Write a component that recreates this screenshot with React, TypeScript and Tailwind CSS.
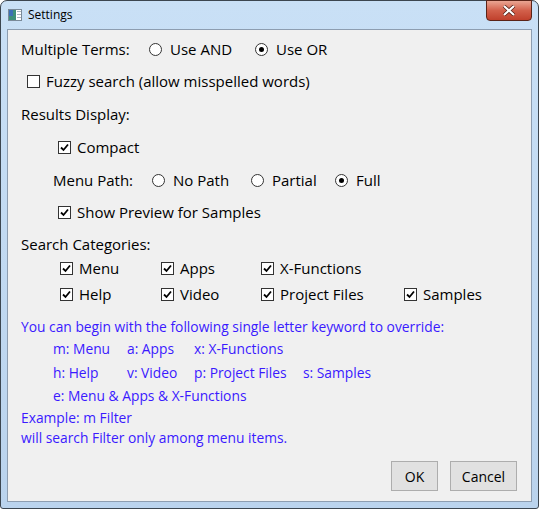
import type { ReactNode } from "react";

const font = { fontFamily: '"Open Sans", "Noto Sans", sans-serif' };

const Radio = ({ checked, children, w }: { checked?: boolean; children: ReactNode; w: string }) => (
  <div className={`flex items-center ${w}`}>
    <span className="flex h-[13px] w-[13px] items-center justify-center rounded-full border border-[#333] bg-white">
      {checked && <span className="h-[5px] w-[5px] rounded-full bg-black" />}
    </span>
    <span className="ml-[8px]">{children}</span>
  </div>
);

const Check = ({ checked, children, w = "" }: { checked?: boolean; children: ReactNode; w?: string }) => (
  <div className={`flex items-center ${w}`}>
    <span className="flex h-[13px] w-[13px] items-center justify-center border border-[#333] bg-white">
      {checked && (
        <svg width="9" height="9" viewBox="0 0 9 9">
          <path d="M1 4.5 L3.5 7 L8 1.5" fill="none" stroke="#000" strokeWidth="1.8" />
        </svg>
      )}
    </span>
    <span className="ml-[6px]">{children}</span>
  </div>
);

const Btn = ({ children, w }: { children: ReactNode; w: string }) => (
  <button className={`flex h-[30px] ${w} items-center justify-center border border-[#adadad] bg-[#e1e1e1] text-[14px] text-black`}>
    {children}
  </button>
);

export default function App() {
  return (
    <div className="h-[509px] w-[539px] bg-white" style={font}>
      <div className="relative flex h-[509px] w-[539px] flex-col rounded-t-[7px] rounded-b-[3px] border border-[#3c4650] bg-gradient-to-b from-[#c9e0f6] to-[#bad3ed]">
        {/* title bar */}
        <div className="flex h-[28px] items-center pl-[7px]">
          <svg width="14" height="12" viewBox="0 0 14 12">
            <rect x="0.5" y="0.5" width="13" height="11" fill="#fff" stroke="#7a8a99" />
            <rect x="1" y="1" width="7" height="10" fill="#3d8f7a" />
            <rect x="1" y="1" width="4" height="6" fill="#3c6fb5" />
            <rect x="9" y="2" width="4" height="1" fill="#a8b4c0" />
            <rect x="9" y="5" width="4" height="1" fill="#a8b4c0" />
            <rect x="9" y="8" width="4" height="1" fill="#a8b4c0" />
          </svg>
          <span className="ml-[6px] text-[12px] text-black">Settings</span>
        </div>
        <div className="absolute right-[6px] top-[-1px] flex h-[21px] w-[46px] items-center justify-center rounded-b-[4px] border border-[#5b2418] bg-gradient-to-b from-[#e9a593] via-[#d2604b] to-[#c0402c]">
          <svg width="14" height="11" viewBox="0 0 14 11">
            <path d="M2 1 L12 10 M12 1 L2 10" stroke="#4a1a10" strokeWidth="3.6" />
            <path d="M2 1 L12 10 M12 1 L2 10" stroke="#fff" strokeWidth="2.2" />
          </svg>
        </div>

        {/* content */}
        <div className="mx-[6px] flex h-[473px] flex-col border border-[#8d9db0] bg-[#f0f0f0] pl-[13px] text-[15px] text-black">
          <div className="mt-[7px] flex h-[24px] items-center">
            <span className="w-[128px]">Multiple Terms:</span>
            <Radio w="w-[106px]">Use AND</Radio>
            <Radio checked w="">Use OR</Radio>
          </div>
          <div className="mt-[8px] flex h-[24px] items-center pl-[6px]">
            <Check>Fuzzy search (allow misspelled words)</Check>
          </div>
          <div className="mt-[9px] flex h-[24px] items-center">Results Display:</div>
          <div className="mt-[9px] flex h-[24px] items-center pl-[37px]">
            <Check checked>Compact</Check>
          </div>
          <div className="mt-[9px] flex h-[24px] items-center pl-[32px]">
            <span className="w-[99px]">Menu Path:</span>
            <Radio w="w-[99px]">No Path</Radio>
            <Radio w="w-[84px]">Partial</Radio>
            <Radio checked w="">Full</Radio>
          </div>
          <div className="mt-[8px] flex h-[24px] items-center pl-[37px]">
            <Check checked>Show Preview for Samples</Check>
          </div>
          <div className="mt-[8px] flex h-[24px] items-center">Search Categories:</div>
          <div className="flex h-[24px] items-center pl-[39px]">
            <Check checked w="w-[101px]">Menu</Check>
            <Check checked w="w-[100px]">Apps</Check>
            <Check checked>X-Functions</Check>
          </div>
          <div className="mt-[2px] flex h-[24px] items-center pl-[39px]">
            <Check checked w="w-[101px]">Help</Check>
            <Check checked w="w-[100px]">Video</Check>
            <Check checked w="w-[143px]">Project Files</Check>
            <Check checked>Samples</Check>
          </div>

          <div className="text-[13.8px] text-[#3a1aff]">
            <div className="mt-[11px] flex h-[20px] items-center">
              You can begin with the following single letter keyword to override:
            </div>
            <div className="mt-[2px] flex h-[20px] items-center pl-[32px]">
              <span className="w-[74px]">m: Menu</span>
              <span className="w-[67px]">a: Apps</span>
              <span>x: X-Functions</span>
            </div>
            <div className="mt-[4px] flex h-[20px] items-center pl-[32px]">
              <span className="w-[74px]">h: Help</span>
              <span className="w-[67px]">v: Video</span>
              <span className="w-[109px]">p: Project Files</span>
              <span>s: Samples</span>
            </div>
            <div className="mt-[3px] flex h-[20px] items-center pl-[32px]">
              e: Menu &amp; Apps &amp; X-Functions
            </div>
            <div className="mt-[2px] flex h-[20px] items-center">Example: m Filter</div>
            <div className="flex h-[20px] items-center">will search Filter only among menu items.</div>
          </div>

          <div className="mt-auto mb-[10px] mr-[14px] flex justify-end gap-[12px]">
            <Btn w="w-[47px]">OK</Btn>
            <Btn w="w-[67px]">Cancel</Btn>
          </div>
        </div>
      </div>
    </div>
  );
}
